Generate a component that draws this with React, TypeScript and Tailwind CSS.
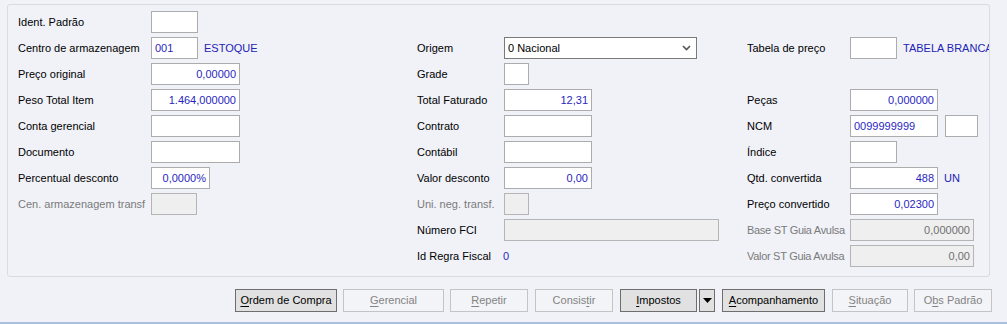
import React from 'react';

const font = { fontFamily: '"Liberation Sans", Arial, sans-serif' };

type BoxProps = {
  w: string;
  value?: string;
  right?: boolean;
  disabled?: boolean;
};

function Box({ w, value, right, disabled }: BoxProps) {
  return (
    <div
      className={`h-[22px] ${w} shrink-0 border flex items-center px-[3px] text-[11px] overflow-hidden whitespace-nowrap ${
        right ? 'justify-end' : 'justify-start'
      } ${disabled ? 'bg-[#efefef] border-[#b5b5b5] text-[#6f6f6f]' : 'bg-white border-[#acacac] text-[#2a1fc0]'}`}
    >
      {value}
    </div>
  );
}

function Row({ label, lw, muted, tight, children }: { label?: string; lw: string; muted?: boolean; tight?: boolean; children?: React.ReactNode }) {
  return (
    <div className="flex items-center h-[22px] mb-1">
      <div
        className={`${lw} shrink-0 text-[11px] whitespace-nowrap ${tight ? 'tracking-[-0.3px]' : ''} ${
          muted ? 'text-[#7a7a7a]' : 'text-black'
        }`}
      >
        {label}
      </div>
      {children}
    </div>
  );
}

function Btn({ label, u, enabled, w, className = '' }: { label: string; u: number; enabled?: boolean; w: string; className?: string }) {
  return (
    <div
      className={`h-[23px] ${w} shrink-0 border flex items-center justify-center text-[11px] whitespace-nowrap ${
        enabled ? 'bg-[#e1e1e1] border-[#6e6e6e] text-black' : 'bg-[#f3f4f8] border-[#c4c4c4] text-[#838383]'
      } ${className}`}
    >
      {label.slice(0, u)}
      <span className="underline underline-offset-2">{label[u]}</span>
      {label.slice(u + 1)}
    </div>
  );
}

export default function App() {
  return (
    <div className="w-[1007px] h-[324px] bg-[#f0f2f8] flex flex-col overflow-hidden" style={font}>
      <div className="mt-1 ml-[7px] w-[983px] h-[273px] border border-[#d7dbe3] rounded-[3px] pl-[10px] pt-[6px] flex">
        {/* column 1 */}
        <div className="w-[399px] shrink-0">
          <Row label="Ident. Padrão" lw="w-[133px]"><Box w="w-[47px]" /></Row>
          <Row label="Centro de armazenagem" lw="w-[133px]">
            <Box w="w-[47px]" value="001" />
            <span className="ml-[6px] text-[11px] text-[#2323b4]">ESTOQUE</span>
          </Row>
          <Row label="Preço original" lw="w-[133px]"><Box w="w-[89px]" value="0,00000" right /></Row>
          <Row label="Peso Total Item" lw="w-[133px]"><Box w="w-[89px]" value="1.464,000000" right /></Row>
          <Row label="Conta gerencial" lw="w-[133px]"><Box w="w-[89px]" /></Row>
          <Row label="Documento" lw="w-[133px]"><Box w="w-[89px]" /></Row>
          <Row label="Percentual desconto" lw="w-[133px]"><Box w="w-[59px]" value="0,0000%" right /></Row>
          <Row label="Cen. armazenagem transf" lw="w-[133px]" muted><Box w="w-[46px]" disabled /></Row>
        </div>

        {/* column 2 */}
        <div className="w-[330px] shrink-0 pt-[26px]">
          <Row label="Origem" lw="w-[87px]">
            <div className="h-[22px] w-[193px] border border-[#7a7a7a] bg-white flex items-center justify-between pl-[3px] pr-[5px] text-[11px] text-black">
              <span>0 Nacional</span>
              <svg width="9" height="6" viewBox="0 0 9 6">
                <path d="M1 1 L4.5 4.5 L8 1" fill="none" stroke="#555" strokeWidth="1.6" />
              </svg>
            </div>
          </Row>
          <Row label="Grade" lw="w-[87px]"><Box w="w-[25px]" /></Row>
          <Row label="Total Faturado" lw="w-[87px]"><Box w="w-[88px]" value="12,31" right /></Row>
          <Row label="Contrato" lw="w-[87px]"><Box w="w-[88px]" /></Row>
          <Row label="Contábil" lw="w-[87px]"><Box w="w-[88px]" /></Row>
          <Row label="Valor desconto" lw="w-[87px]"><Box w="w-[88px]" value="0,00" right /></Row>
          <Row label="Uni. neg. transf." lw="w-[87px]" muted><Box w="w-[25px]" disabled /></Row>
          <Row label="Número FCI" lw="w-[87px]"><Box w="w-[215px]" disabled /></Row>
          <Row label="Id Regra Fiscal" lw="w-[86px]">
            <span className="text-[11px] text-[#2a1fc0]">0</span>
          </Row>
        </div>

        {/* column 3 */}
        <div className="flex-1 min-w-0 overflow-hidden pt-[26px]">
          <Row label="Tabela de preço" lw="w-[103px]">
            <Box w="w-[47px]" />
            <span className="ml-[6px] text-[11px] text-[#2323b4] whitespace-nowrap">TABELA BRANCA</span>
          </Row>
          <Row lw="w-[103px]" />
          <Row label="Peças" lw="w-[103px]"><Box w="w-[88px]" value="0,000000" right /></Row>
          <Row label="NCM" lw="w-[103px]">
            <Box w="w-[88px]" value="0099999999" />
            <div className="ml-[7px]"><Box w="w-[33px]" /></div>
          </Row>
          <Row label="Índice" lw="w-[103px]"><Box w="w-[47px]" /></Row>
          <Row label="Qtd. convertida" lw="w-[103px]">
            <Box w="w-[88px]" value="488" right />
            <span className="ml-[6px] text-[11px] text-[#2323b4]">UN</span>
          </Row>
          <Row label="Preço convertido" lw="w-[103px]"><Box w="w-[88px]" value="0,02300" right /></Row>
          <Row label="Base ST Guia Avulsa" lw="w-[103px]" muted tight><Box w="w-[124px]" value="0,000000" right disabled /></Row>
          <Row label="Valor ST Guia Avulsa" lw="w-[103px]" muted tight><Box w="w-[124px]" value="0,00" right disabled /></Row>
        </div>
      </div>

      {/* buttons */}
      <div className="mt-[12px] pl-[235px] flex items-center">
        <Btn label="Ordem de Compra" u={0} enabled w="w-[102px]" />
        <Btn label="Gerencial" u={0} w="w-[101px]" className="ml-[6px]" />
        <Btn label="Repetir" u={0} w="w-[78px]" className="ml-[6px]" />
        <Btn label="Consistir" u={6} w="w-[78px]" className="ml-[7px]" />
        <Btn label="Impostos" u={0} enabled w="w-[77px]" className="ml-[7px]" />
        <div className="ml-[2px] h-[23px] w-[16px] border border-[#6e6e6e] bg-[#e1e1e1] flex items-center justify-center">
          <svg width="9" height="5" viewBox="0 0 9 5"><path d="M0 0 H9 L4.5 5 Z" fill="#000" /></svg>
        </div>
        <Btn label="Acompanhamento" u={0} enabled w="w-[103px]" className="ml-[7px]" />
        <Btn label="Situação" u={0} w="w-[76px]" className="ml-[7px]" />
        <Btn label="Obs Padrão" u={1} w="w-[78px]" className="ml-[6px]" />
      </div>

      <div className="mt-auto h-[2px] bg-[#a9c0dc]" />
    </div>
  );
}
